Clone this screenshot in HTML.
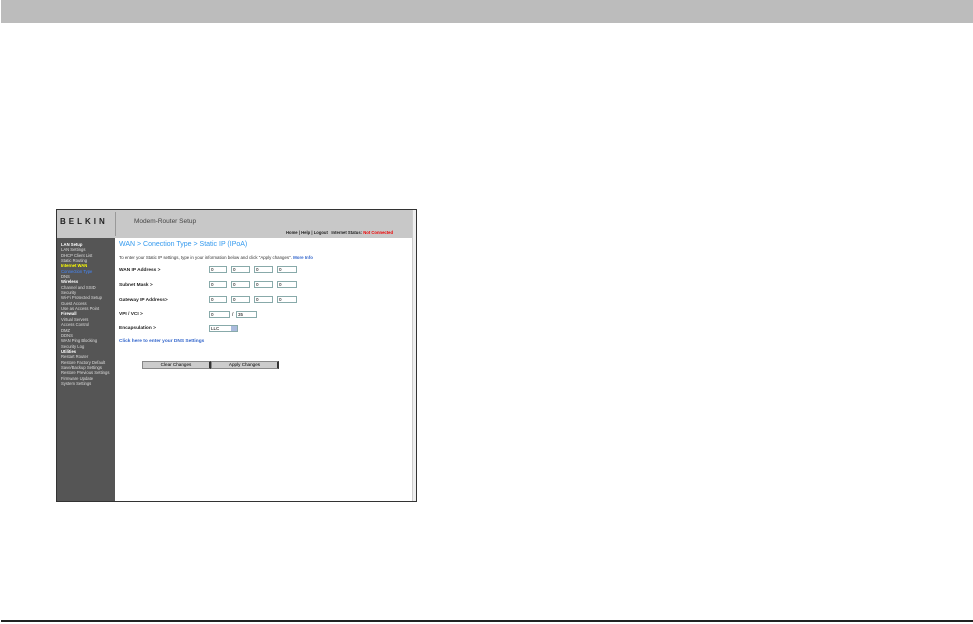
<!DOCTYPE html>
<html><head><meta charset="utf-8"><style>
*{margin:0;padding:0;box-sizing:border-box}
body{width:973px;height:624px;background:#fff;position:relative;overflow:hidden;font-family:"Liberation Sans",sans-serif}
.a{position:absolute}
.bar{left:1px;top:0;width:972px;height:23px;background:#bcbcbc}
.line{left:1px;top:620px;width:972px;height:2px;background:#222}
.frame{left:56px;top:209px;width:361px;height:293px;border:1px solid #333;background:#fff;overflow:hidden}
.hdr{left:0;top:0;width:355px;height:28px;background:#c8c8c8}
.side{left:0;top:28px;width:58px;height:270px;background:#555;font-size:4.2px;line-height:5.35px;color:#ddd;padding:4px 0 0 4px;white-space:nowrap}
.side b{color:#fff}
.sb{left:355px;top:0;width:5px;height:293px;background:#eee;border-left:1px solid #ccc}
.t{font-size:4px;white-space:nowrap}
.lbl{font-size:4.8px;font-weight:bold;color:#222;white-space:nowrap}
.in{height:7px;border:1px solid #8aa;background:#fff;font-size:4.5px;line-height:5px;padding-left:1px}
.btn{top:151px;height:8px;background:#ccc;border:1px solid #888;border-right:2px solid #333;font-size:4.6px;text-align:center;line-height:6px}
</style></head><body>
<div class="a bar"></div>
<div class="a line"></div>
<div class="a frame">
 <div class="a hdr">
  <div class="a" style="left:3px;top:7px;font-size:8px;font-weight:bold;letter-spacing:3px;color:#222">BELKIN</div>
  <div class="a" style="left:58px;top:2px;width:1px;height:24px;background:#999"></div>
  <div class="a t" style="left:77px;top:8px;font-size:6.5px;color:#444">Modem-Router Setup</div>
  <div class="a t" style="left:229px;top:20px;font-size:4.2px;font-weight:bold;color:#222">Home | Help | Logout &nbsp; Internet Status: <span style="color:#e00">Not Connected</span></div>
 </div>
 <div class="a side"><b>LAN Setup</b><br>LAN Settings<br>DHCP Client List<br>Static Routing<br><b style="color:#ff0">Internet WAN</b><br><span style="color:#48f">Connection Type</span><br>DNS<br><b>Wireless</b><br>Channel and SSID<br>Security<br>Wi-Fi Protected Setup<br>Guest Access<br>Use as Access Point<br><b>Firewall</b><br>Virtual Servers<br>Access Control<br>DMZ<br>DDNS<br>WAN Ping Blocking<br>Security Log<br><b>Utilities</b><br>Restart Router<br>Restore Factory Default<br>Save/Backup Settings<br>Restore Previous Settings<br>Firmware Update<br>System Settings</div>
 <div class="a t" style="left:62px;top:31px;font-size:7px;color:#3399ee">WAN &gt; Conection Type &gt; Static IP (IPoA)</div>
 <div class="a t" style="left:62px;top:45px;font-size:4.4px;color:#333">To enter your Static IP settings, type in your information below and click "Apply changes". <b style="color:#36c">More Info</b></div>
 <div class="a lbl" style="left:62px;top:58px">WAN IP Address &gt;</div>
 <div class="a lbl" style="left:62px;top:73px">Subnet Mask &gt;</div>
 <div class="a lbl" style="left:62px;top:88px">Gateway IP Address&gt;</div>
 <div class="a lbl" style="left:62px;top:102px">VPI / VCI &gt;</div>
 <div class="a lbl" style="left:62px;top:116px">Encapsulation &gt;</div>
 <div class="a lbl" style="left:62px;top:129px;color:#36c">Click here to enter your DNS Settings</div>
 <div class="a in" style="left:152px;top:56px;width:18px">0</div><div class="a in" style="left:174px;top:56px;width:19px">0</div><div class="a in" style="left:197px;top:56px;width:19px">0</div><div class="a in" style="left:220px;top:56px;width:20px">0</div>
 <div class="a in" style="left:152px;top:71px;width:18px">0</div><div class="a in" style="left:174px;top:71px;width:19px">0</div><div class="a in" style="left:197px;top:71px;width:19px">0</div><div class="a in" style="left:220px;top:71px;width:20px">0</div>
 <div class="a in" style="left:152px;top:86px;width:18px">0</div><div class="a in" style="left:174px;top:86px;width:19px">0</div><div class="a in" style="left:197px;top:86px;width:19px">0</div><div class="a in" style="left:220px;top:86px;width:20px">0</div>
 <div class="a in" style="left:152px;top:101px;width:21px">0</div><div class="a t" style="left:175px;top:102px;font-size:5px">/</div><div class="a in" style="left:179px;top:101px;width:21px">35</div>
 <div class="a in" style="left:152px;top:115px;width:29px">LLC<span style="position:absolute;right:0;top:0;width:6px;height:5px;background:#abd"></span></div>
 <div class="a btn" style="left:85px;width:69px">Clear Changes</div>
 <div class="a btn" style="left:154px;width:68px">Apply Changes</div>
 <div class="a sb"></div>
</div>
</body></html>
